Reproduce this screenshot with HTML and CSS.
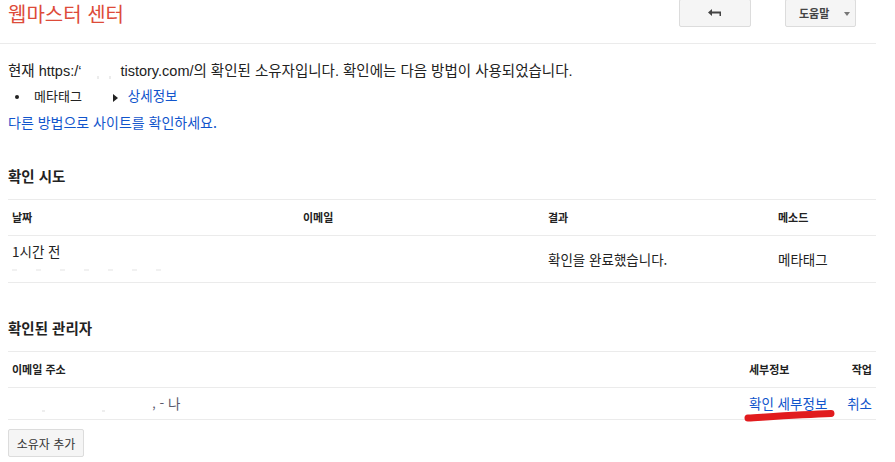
FILE: index.html
```html
<!DOCTYPE html>
<html lang="ko">
<head>
<meta charset="utf-8">
<title>웹마스터 센터</title>
<link rel="stylesheet" href="styles.css">
</head>
<body>
<div class="page">
  <header class="topbar">
    <div class="title">웹마스터 센터</div>
    <div class="actions">
      <button class="btn btn-back" type="button" aria-label="뒤로">
        <svg width="14" height="8" viewBox="0 0 14 8" class="back-icon"><path d="M0 3.5 L4 0 V2.5 H13 V7 H11.5 V4.5 H4 V7 Z" fill="#444"/></svg>
      </button>
      <button class="btn btn-help" type="button">도움말<span class="caret"></span></button>
    </div>
  </header>

  <main class="content">
    <p class="intro">현재 https:/‘<span class="redact redact-url"></span>tistory.com/의 확인된 소유자입니다. 확인에는 다음 방법이 사용되었습니다.</p>
    <ul class="methods">
      <li><span class="method-name">메타태그</span><span class="tri"></span><a href="#" class="link">상세정보</a></li>
    </ul>
    <p class="other"><a href="#" class="link">다른 방법으로 사이트를 확인하세요.</a></p>

    <h2 class="section-title">확인 시도</h2>
    <div class="tbl tbl-attempts">
      <div class="row head">
        <div class="cell">날짜</div>
        <div class="cell">이메일</div>
        <div class="cell">결과</div>
        <div class="cell">메소드</div>
      </div>
      <div class="row body">
        <div class="cell cell-date">
          <div>1시간 전</div>
          <div class="redact redact-line"></div>
        </div>
        <div class="cell"></div>
        <div class="cell">확인을 완료했습니다.</div>
        <div class="cell">메타태그</div>
      </div>
    </div>

    <h2 class="section-title second">확인된 관리자</h2>
    <div class="tbl tbl-owners">
      <div class="row head">
        <div class="cell">이메일 주소</div>
        <div class="cell">세부정보</div>
        <div class="cell right">작업</div>
      </div>
      <div class="row body">
        <div class="cell"><span class="redact redact-email"></span><span class="me">‚ - 나</span></div>
        <div class="cell"><a href="#" class="link">확인 세부정보</a></div>
        <div class="cell right"><a href="#" class="link">취소</a></div>
      </div>
    </div>

    <button class="btn btn-add" type="button">소유자 추가</button>
  </main>

  <svg class="marker" width="94" height="14" viewBox="0 0 94 14" aria-hidden="true"><path d="M5 10 C 30 8.5, 60 6.5, 88 5.5" stroke="#e11b1e" stroke-width="7" stroke-linecap="round" fill="none"/></svg>
</div>
</body>
</html>
```
FILE: styles.css
```css
* { box-sizing: border-box; }
body {
  margin: 0;
  background: #fff;
  color: #222;
  font-family: "Liberation Sans", "Noto Sans CJK KR", Arial, sans-serif;
  font-size: 14px;
}
.page {
  position: relative;
  width: 876px;
}
.topbar {
  display: flex;
  justify-content: space-between;
  align-items: flex-start;
  height: 44px;
  border-bottom: 1px solid #ebebeb;
}
.title {
  padding: 0 0 0 8px;
  font-family: "Noto Sans CJK KR", sans-serif;
  font-size: 20px;
  line-height: 28px;
  color: #dd4b39;
}
.actions {
  display: flex;
  gap: 34px;
  padding-right: 20px;
}
.btn {
  background: #f5f5f5;
  border: 1px solid #dcdcdc;
  border-radius: 2px;
  color: #444;
  font-family: "Noto Sans CJK KR", sans-serif;
  font-size: 11px;
  font-weight: 700;
  padding: 0;
  cursor: pointer;
}
.btn-back {
  width: 72px;
  height: 28px;
  margin-top: -1px;
  display: flex;
  align-items: center;
  justify-content: center;
}
.btn-help {
  width: 71px;
  height: 28px;
  margin-top: -1px;
  display: flex;
  align-items: center;
  justify-content: flex-start;
  padding-left: 13px;
  gap: 15px;
}
.caret {
  width: 0;
  height: 0;
  border-left: 3.5px solid transparent;
  border-right: 3.5px solid transparent;
  border-top: 4px solid #777;
  margin-top: 1px;
}
.content {
  padding-left: 8px;
}
.intro {
  margin: 17px 0 0;
  font-size: 14.5px;
  line-height: 20px;
}
.redact { display: inline-block; }
.redact-url {
  width: 39px;
  height: 3px;
  vertical-align: -3px;
  background: linear-gradient(90deg, transparent 0 16px, #ececec 16px 18px, transparent 18px 28px, #ececec 28px 30px, transparent 30px);
}
.methods {
  margin: 4px 0 0;
  padding-left: 22px;
  line-height: 20px;
}
.methods li { list-style: disc; padding-left: 4px; }
.method-name { font-family: "Noto Sans CJK KR", sans-serif; font-size: 13px; }
.tri {
  display: inline-block;
  width: 0;
  height: 0;
  border-top: 4.5px solid transparent;
  border-bottom: 4.5px solid transparent;
  border-left: 5px solid #222;
  margin: 0 10px 0 31px;
  vertical-align: -1px;
}
.link {
  color: #1155cc;
  text-decoration: none;
  font-family: "Noto Sans CJK KR", sans-serif;
}
.methods .link { font-size: 13.5px; }
.other {
  margin: 6px 0 0;
  line-height: 20px;
}
.section-title {
  margin: 32px 0 12px;
  font-family: "Noto Sans CJK KR", sans-serif;
  font-size: 14.5px;
  font-weight: 700;
  line-height: 22px;
  color: #222;
}
.section-title.second { margin-top: 34px; }
.tbl {
  border-top: 1px solid #ebebeb;
  font-family: "Noto Sans CJK KR", sans-serif;
}
.row {
  display: grid;
  align-items: center;
  border-bottom: 1px solid #ebebeb;
}
.tbl-attempts .row { grid-template-columns: 291px 245px 230px 1fr; }
.tbl-owners .row { grid-template-columns: 737px 98px 1fr; }
.row.head {
  height: 36px;
  font-size: 11px;
  font-weight: 700;
  color: #222;
}
.tbl-attempts .row.body { height: 47px; }
.tbl-owners .row.body { height: 32px; }
.tbl .row.body { font-size: 13.5px; }
.cell {
  padding: 0 4px;
  line-height: 19px;
}
.cell.right { text-align: right; }
.cell-date {
  align-self: start;
  padding-top: 6px;
}
.redact-line {
  display: block;
  width: 160px;
  height: 2px;
  margin-top: 8px;
  background: repeating-linear-gradient(90deg, #f1f1f1 0 5px, transparent 5px 24px);
}
.redact-email {
  width: 140px;
  height: 2px;
  vertical-align: -3px;
  background: repeating-linear-gradient(90deg, transparent 0 30px, #eeeeee 30px 33px, transparent 33px 60px);
}
.me { color: #5a5a6a; }
.btn-add {
  margin-top: 9px;
  width: 76px;
  height: 28px;
  font-weight: 400;
  font-size: 12px;
  color: #333;
}
.marker {
  position: absolute;
  left: 743px;
  top: 408px;
}
```
